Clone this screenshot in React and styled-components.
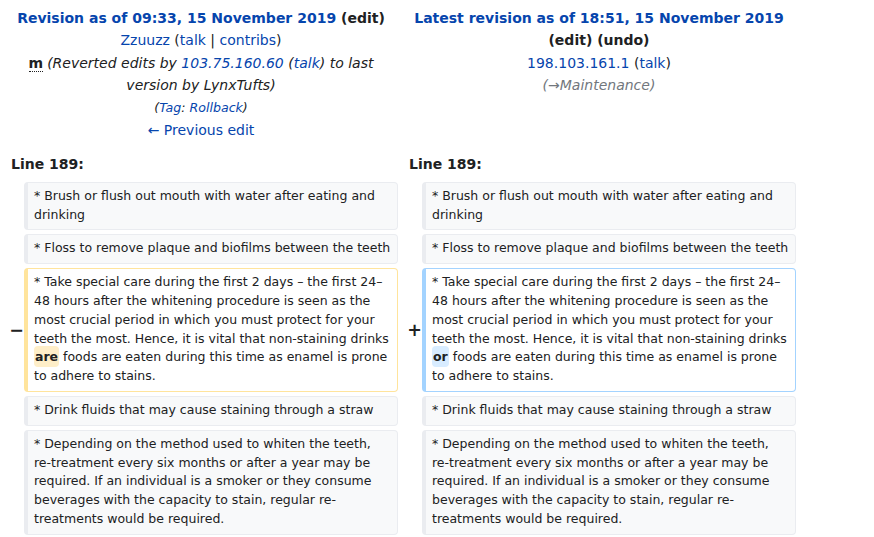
import React from 'react'
import styled, { createGlobalStyle } from "styled-components";

const GlobalStyle = createGlobalStyle`
  body {
    margin: 0;
    background: #ffffff;
    color: #202122;
    font-family: "DejaVu Sans", sans-serif;
  }
`;

const DiffTable = styled.table`
  width: 800px;
  table-layout: fixed;
  border-collapse: separate;
  border-spacing: 4px;
`;

const Col = styled.col`
  width: ${(p) => p.$w}px;
`;

const TitleCell = styled.td`
  text-align: center;
  vertical-align: top;
  padding: 3px 6px 0;
  font-size: 14px;
  line-height: 22.4px;
`;

const TitleLine = styled.div`
  font-size: ${(p) => (p.$small ? "12.6px" : "inherit")};
  font-style: ${(p) => (p.$italic ? "italic" : "normal")};
  color: ${(p) => (p.$muted ? "#72777d" : "inherit")};
`;

const Strong = styled.strong`
  font-weight: bold;
`;

const Link = styled.a`
  color: #0645ad;
  text-decoration: none;
  cursor: pointer;
`;

const Minor = styled.abbr`
  font-weight: bold;
  font-style: normal;
  text-decoration: none;
  border-bottom: 1px dotted #202122;
  margin-right: 4px;
`;

const LineNo = styled.td`
  font-weight: bold;
  font-size: 14px;
  line-height: 22.4px;
  padding: 8px 7px 2px;
`;

const Marker = styled.td`
  text-align: right;
  vertical-align: middle;
  font-weight: bold;
  font-size: 17.5px;
  line-height: 1.2;
  padding: 0;
  white-space: nowrap;
`;

const MarkerGlyph = styled.span`
  margin-right: -4px;
`;

const borders = {
  context: "#eaecf0",
  deleted: "#ffe49c",
  added: "#a3d3ff",
};

const Content = styled.td`
  vertical-align: top;
  font-size: 12.5px;
  line-height: 18.8px;
  padding: 4px 5px 5px 6px;
  border-style: solid;
  border-width: 1px 1px 1px 4px;
  border-color: ${(p) => borders[p.$kind]};
  border-radius: 4px;
  background: ${(p) => (p.$kind === "context" ? "#f8f9fa" : "#ffffff")};
  color: #202122;
  word-wrap: break-word;
`;

const NoWrap = styled.span`
  white-space: nowrap;
`;

const Change = styled.ins`
  text-decoration: none;
  font-weight: bold;
  border-radius: 4px;
  padding: 3px 1px;
  background: ${(p) => (p.$kind === "deleted" ? "#feeec8" : "#d8ecff")};
`;

const before = [
  { id: "brush", text: "* Brush or flush out mouth with water after eating and drinking" },
  { id: "floss", text: "* Floss to remove plaque and biofilms between the teeth" },
];

const after = [
  { id: "straw", text: "* Drink fluids that may cause staining through a straw" },
  {
    id: "method",
    text: (
      <>
        * Depending on the method used to whiten the teeth, <NoWrap>re-treatment</NoWrap> every six
        months or after a year may be required. If an individual is a smoker or they consume beverages
        with the capacity to stain, regular re-treatments would be required.
      </>
    ),
  },
];

const changedStart =
  "* Take special care during the first 2 days – the first 24–48 hours after the whitening procedure is seen as the most crucial period in which you must protect for your teeth the most. Hence, it is vital that non-staining drinks ";
const changedEnd =
  " foods are eaten during this time as enamel is prone to adhere to stains.";

const ContextRow = ({ text }) => (
  <tr>
    <Marker />
    <Content $kind="context">{text}</Content>
    <Marker />
    <Content $kind="context">{text}</Content>
  </tr>
);

const App = () => {
  return (
    <>
      <GlobalStyle />
      <DiffTable>
        <colgroup>
          <Col $w={16} />
          <Col $w={374} />
          <Col $w={16} />
          <Col $w={374} />
        </colgroup>
        <tbody>
          <tr>
            <TitleCell colSpan={2}>
              <TitleLine>
                <Strong>
                  <Link>Revision as of 09:33, 15 November 2019</Link> (edit)
                </Strong>
              </TitleLine>
              <TitleLine>
                <Link>Zzuuzz</Link> (<Link>talk</Link> | <Link>contribs</Link>)
              </TitleLine>
              <TitleLine>
                <Minor title="This is a minor edit">m</Minor>
                <i>
                  (Reverted edits by <Link>103.75.160.60</Link> (<Link>talk</Link>) to last version by LynxTufts)
                </i>
              </TitleLine>
              <TitleLine $small $italic>
                (<Link>Tag</Link>: <Link>Rollback</Link>)
              </TitleLine>
              <TitleLine>
                <Link>← Previous edit</Link>
              </TitleLine>
            </TitleCell>
            <TitleCell colSpan={2}>
              <TitleLine>
                <Strong>
                  <Link>Latest revision as of 18:51, 15 November 2019</Link> (edit) (undo)
                </Strong>
              </TitleLine>
              <TitleLine>
                <Link>198.103.161.1</Link> (<Link>talk</Link>)
              </TitleLine>
              <TitleLine $italic $muted>
                (→Maintenance)
              </TitleLine>
            </TitleCell>
          </tr>
          <tr>
            <LineNo colSpan={2}>Line 189:</LineNo>
            <LineNo colSpan={2}>Line 189:</LineNo>
          </tr>
          {before.map((row) => (
            <ContextRow key={row.id} text={row.text} />
          ))}
          <tr>
            <Marker>
              <MarkerGlyph>−</MarkerGlyph>
            </Marker>
            <Content $kind="deleted">
              {changedStart}
              <Change $kind="deleted">are</Change>
              {changedEnd}
            </Content>
            <Marker>
              <MarkerGlyph>+</MarkerGlyph>
            </Marker>
            <Content $kind="added">
              {changedStart}
              <Change $kind="added">or</Change>
              {changedEnd}
            </Content>
          </tr>
          {after.map((row) => (
            <ContextRow key={row.id} text={row.text} />
          ))}
        </tbody>
      </DiffTable>
    </>
  )
}

export default App;
